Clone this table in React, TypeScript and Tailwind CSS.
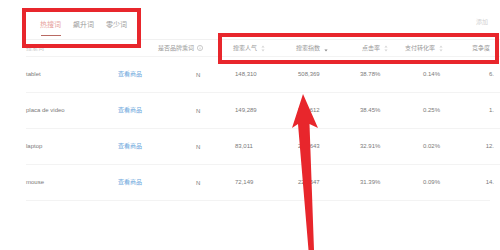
import React from "react";

const rows = [
  { kw: "tablet", pop: "148,310", idx: "508,369", ctr: "38.78%", cvr: "0.14%", comp: "6." },
  { kw: "placa de video", pop: "149,289", idx: "262,612", ctr: "38.45%", cvr: "0.25%", comp: "1." },
  { kw: "laptop", pop: "83,011", idx: "231,643", ctr: "32.91%", cvr: "0.02%", comp: "12." },
  { kw: "mouse", pop: "72,149", idx: "226,547", ctr: "31.39%", cvr: "0.09%", comp: "14." },
];

const font = { fontFamily: '"Liberation Sans", "Noto Sans CJK SC", sans-serif' };

// little up/down sort marker next to the header text
const Sort = ({ down }: { down?: boolean }) => (
  <svg width="4" height="7" viewBox="0 0 4 7" className="ml-[4px] inline-block">
    {!down && <path d="M2 0.5 L3.6 2.6 H0.4 Z" fill="#d6d6d6" />}
    <path d="M2 6.5 L3.6 4.4 H0.4 Z" fill={down ? "#8a8a8a" : "#d6d6d6"} />
  </svg>
);

const Info = () => (
  <svg width="6" height="6" viewBox="0 0 6 6" className="ml-[3px] inline-block">
    <circle cx="3" cy="3" r="2.6" fill="none" stroke="#aaa" strokeWidth="0.6" />
    <path d="M3 2.6 V4.4 M3 1.5 V1.9" stroke="#aaa" strokeWidth="0.6" />
  </svg>
);

export default function App() {
  return (
    <div className="relative w-[500px] h-[250px] overflow-hidden bg-white" style={font}>
      {/* tabs */}
      <div className="flex items-end justify-between h-[40px] ml-[26px] border-b border-[#f1f1f1]">
        <div className="flex gap-[12px] pl-[14px] text-[7px] leading-none">
          <div className="flex flex-col items-center">
            <span className="text-[#e6a09a] pb-[7px]">热搜词</span>
            <span className="w-[20px] h-px bg-[#b96a63] mb-[3px]" />
          </div>
          <span className="text-[#9a9a9a] pb-[11px]">飙升词</span>
          <span className="text-[#9a9a9a] pb-[11px]">零少词</span>
        </div>
        <span className="text-[6px] text-[#d2d2d2] pb-[12px] pr-[12px]">添加</span>
      </div>

      {/* header */}
      <div className="flex items-center h-[16px] pl-[26px] text-[6px] text-[#999]">
        <div className="w-[132px] text-[#c8c8c8]">搜索词</div>
        <div className="w-[75px] flex items-center">是否品牌乘词<Info /></div>
        <div className="w-[63px] flex items-center">搜索人气<Sort /></div>
        <div className="w-[62px] flex items-center">搜索指数<Sort down /></div>
        <div className="w-[47px] flex items-center pl-[4px]">点击率<Sort /></div>
        <div className="w-[67px] flex items-center">支付转化率<Sort /></div>
        <div className="w-[28px]">竞争度</div>
      </div>

      {/* rows */}
      {rows.map((r) => (
        <div
          key={r.kw}
          className="flex items-center h-[36px] ml-[26px] border-t border-[#f3f3f3] text-[6px] text-[#7a7a7a]"
        >
          <div className="w-[92px]">{r.kw}</div>
          <div className="w-[40px] text-[#6aa6dc]">查看商品</div>
          <div className="w-[75px] pl-[38px] pt-[2px]">N</div>
          <div className="w-[63px] pl-[2px]">{r.pop}</div>
          <div className="w-[62px] pl-[2px]">{r.idx}</div>
          <div className="w-[47px] pl-[2px]">{r.ctr}</div>
          <div className="w-[67px] pl-[18px]">{r.cvr}</div>
          <div className="w-[22px] text-right">{r.comp}</div>
        </div>
      ))}
      <div className="ml-[26px] mr-[10px] border-t border-[#f3f3f3]" />

      {/* annotation boxes */}
      <div className="absolute left-[22px] top-[8px] w-[119px] h-[40px] border-4 border-[#e8262c]" />
      <div className="absolute left-[218px] top-[33px] w-[281px] h-[31px] border-4 border-[#e8262c]" />

      {/* annotation arrow */}
      <svg className="absolute left-0 top-0" width="500" height="250" viewBox="0 0 500 250">
        <polygon
          points="303,94 318,128 309.5,124 314,250 308.5,250 298,124 292,128"
          fill="#e8262c"
        />
      </svg>
    </div>
  );
}
